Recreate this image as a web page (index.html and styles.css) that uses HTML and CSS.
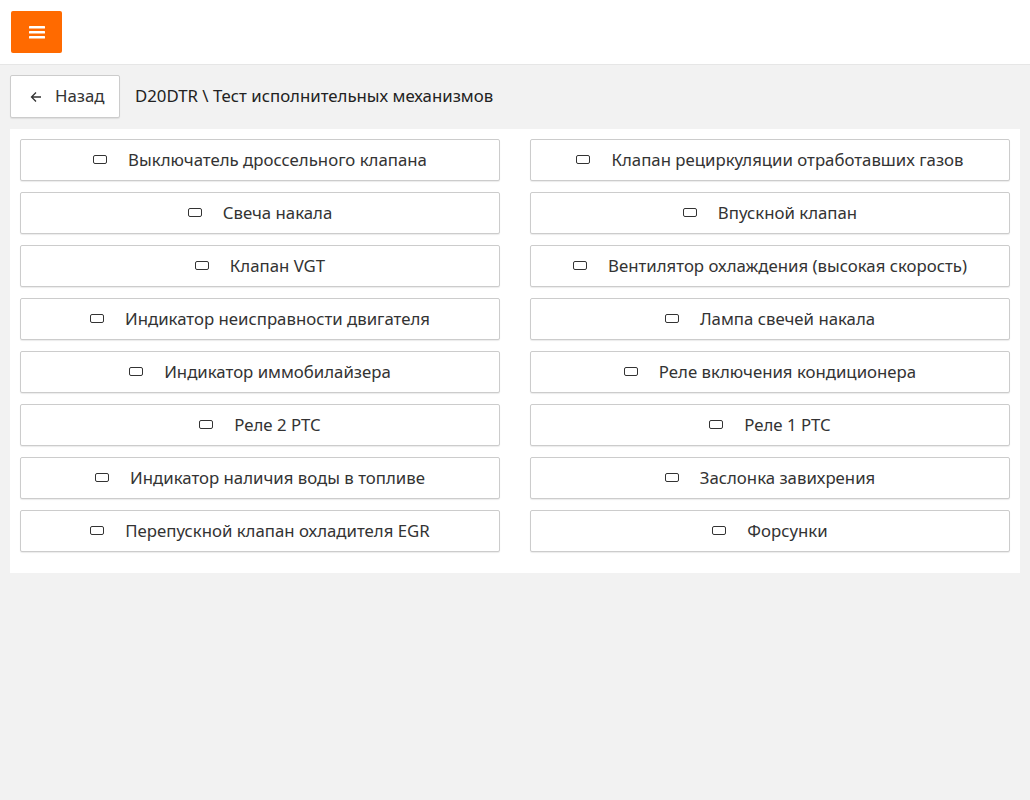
FILE: index.html
```html
<!DOCTYPE html>
<html lang="ru">
<head>
<meta charset="utf-8">
<title>D20DTR</title>
<link rel="stylesheet" href="styles.css">
</head>
<body>
<header class="topbar">
  <button class="menu-btn" aria-label="menu">
    <svg width="16" height="14" viewBox="0 0 16 14"><rect x="0" y="1" width="16" height="2.4" rx="0.5"/><rect x="0" y="6" width="16" height="2.4" rx="0.5"/><rect x="0" y="11" width="16" height="2.4" rx="0.5"/></svg>
  </button>
</header>
<div class="toolbar">
  <button class="back-btn">
    <svg class="back-icon" width="12" height="12" viewBox="0 0 12 12"><path d="M11 6H1.5M6 1.5L1.5 6L6 10.5" fill="none" stroke="#333" stroke-width="1.3"/></svg>
    <span>Назад</span>
  </button>
  <div class="crumb">D20DTR \ Тест исполнительных механизмов</div>
</div>
<main class="panel">
  <div class="grid">
    <button class="act"><i class="ico"></i><span>Выключатель дроссельного клапана</span></button>
    <button class="act"><i class="ico"></i><span>Клапан рециркуляции отработавших газов</span></button>
    <button class="act"><i class="ico"></i><span>Свеча накала</span></button>
    <button class="act"><i class="ico"></i><span>Впускной клапан</span></button>
    <button class="act"><i class="ico"></i><span>Клапан VGT</span></button>
    <button class="act"><i class="ico"></i><span>Вентилятор охлаждения (высокая скорость)</span></button>
    <button class="act"><i class="ico"></i><span>Индикатор неисправности двигателя</span></button>
    <button class="act"><i class="ico"></i><span>Лампа свечей накала</span></button>
    <button class="act"><i class="ico"></i><span>Индикатор иммобилайзера</span></button>
    <button class="act"><i class="ico"></i><span>Реле включения кондиционера</span></button>
    <button class="act"><i class="ico"></i><span>Реле 2 PTC</span></button>
    <button class="act"><i class="ico"></i><span>Реле 1 PTC</span></button>
    <button class="act"><i class="ico"></i><span>Индикатор наличия воды в топливе</span></button>
    <button class="act"><i class="ico"></i><span>Заслонка завихрения</span></button>
    <button class="act"><i class="ico"></i><span>Перепускной клапан охладителя EGR</span></button>
    <button class="act"><i class="ico"></i><span>Форсунки</span></button>
  </div>
</main>
</body>
</html>
```
FILE: styles.css
```css
* { box-sizing: border-box; }
html, body { margin: 0; padding: 0; }
body {
  background: #f2f2f2;
  font-family: "Noto Sans", "Open Sans", sans-serif;
  color: #333;
  font-size: 16.8px;
}
button { font-family: inherit; font-size: 16.8px; color: #333; cursor: pointer; }
.topbar {
  height: 65px;
  background: #fff;
  border-bottom: 1px solid #e6e6e6;
  padding: 11px;
}
.menu-btn {
  width: 51px;
  height: 42px;
  background: #ff6a00;
  border: none;
  border-radius: 2px;
  display: flex;
  align-items: center;
  justify-content: center;
  padding: 0;
}
.menu-btn svg { fill: #fff; }
.toolbar {
  display: flex;
  align-items: center;
  padding: 10px 10px 0 10px;
}
.back-btn {
  width: 110px;
  height: 43px;
  background: #fff;
  border: 1px solid #ccc;
  border-radius: 2px;
  box-shadow: 0 1px 1px rgba(0,0,0,0.08);
  display: flex;
  align-items: center;
  padding: 0 0 2px 19px;
  gap: 13px;
}
.back-icon { flex: none; margin-top: 2px; }
.crumb {
  margin-left: 15px;
  color: #222;
  padding-bottom: 2px;
}
.panel {
  margin: 11px 10px 0 10px;
  background: #fff;
  padding: 10px 10px 21px 10px;
}
.grid {
  display: grid;
  grid-template-columns: 1fr 1fr;
  column-gap: 30px;
  row-gap: 11px;
}
.act {
  height: 42px;
  background: #fff;
  border: 1px solid #ccc;
  border-radius: 2px;
  box-shadow: 0 1px 1px rgba(0,0,0,0.08);
  display: flex;
  align-items: center;
  justify-content: center;
  gap: 21px;
  padding: 0 0 2px 0;
}
.ico {
  display: block;
  width: 14px;
  height: 9px;
  border: 1.7px solid #333;
  border-radius: 2px;
  flex: none;
}
```
